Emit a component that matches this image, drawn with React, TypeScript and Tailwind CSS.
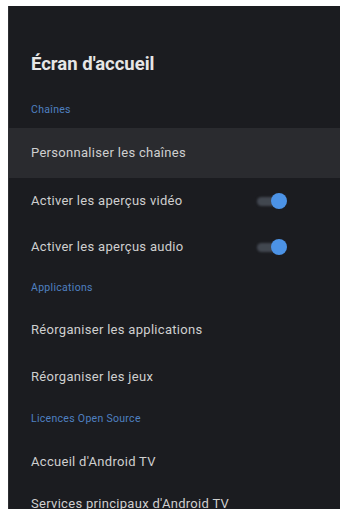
import React from 'react'

type Row =
  | { kind: 'header'; label: string; h: string }
  | { kind: 'item'; label: string; h: string; active?: boolean; toggle?: boolean }

const rows: Row[] = [
  { kind: 'header', label: 'Chaînes', h: 'h-[36px]' },
  { kind: 'item', label: 'Personnaliser les chaînes', h: 'h-[50px]', active: true },
  { kind: 'item', label: 'Activer les aperçus vidéo', h: 'h-[46px]', toggle: true },
  { kind: 'item', label: 'Activer les aperçus audio', h: 'h-[46px]', toggle: true },
  { kind: 'header', label: 'Applications', h: 'h-[36px]' },
  { kind: 'item', label: 'Réorganiser les applications', h: 'h-[48px]' },
  { kind: 'item', label: 'Réorganiser les jeux', h: 'h-[46px]' },
  { kind: 'header', label: 'Licences Open Source', h: 'h-[38px]' },
  { kind: 'item', label: "Accueil d'Android TV", h: 'h-[48px]' },
  { kind: 'item', label: "Services principaux d'Android TV", h: 'h-[36px]' },
]

function Toggle() {
  return (
    <div className="relative w-[30px] h-[16px] flex items-center">
      <div className="w-[26px] h-[9px] rounded-full bg-[#5b6470]/60 blur-[1px]" />
      <div className="absolute right-0 w-[16px] h-[16px] rounded-full bg-[#4c93e6] blur-[0.5px]" />
    </div>
  )
}

export default function App() {
  return (
    <div className="h-[509px] w-[343px] bg-white overflow-hidden pt-[6px] pl-[8px] pr-[3px] font-['Roboto',sans-serif]">
      <div className="h-full bg-[#1b1c20] border-l border-[#2e2f33]">
        <div className="pt-[45px] pl-[22px] h-[86px]">
          <h1 className="text-[18.5px] leading-[26px] font-bold text-[#e6e6e6]">Écran d'accueil</h1>
        </div>
        {rows.map((r) =>
          r.kind === 'header' ? (
            <div key={r.label} className={`${r.h} flex items-center pl-[22px]`}>
              <span className="text-[10.5px] tracking-[0.3px] text-[#4f80c0]">{r.label}</span>
            </div>
          ) : (
            <div
              key={r.label}
              className={`${r.h} flex items-center justify-between pl-[22px] pr-[53px] ${r.active ? 'bg-[#2a2b2f]' : ''}`}
            >
              <span className="text-[13px] tracking-[0.3px] text-[#cfcfcf] whitespace-nowrap">{r.label}</span>
              {r.toggle && <Toggle />}
            </div>
          )
        )}
      </div>
    </div>
  )
}
